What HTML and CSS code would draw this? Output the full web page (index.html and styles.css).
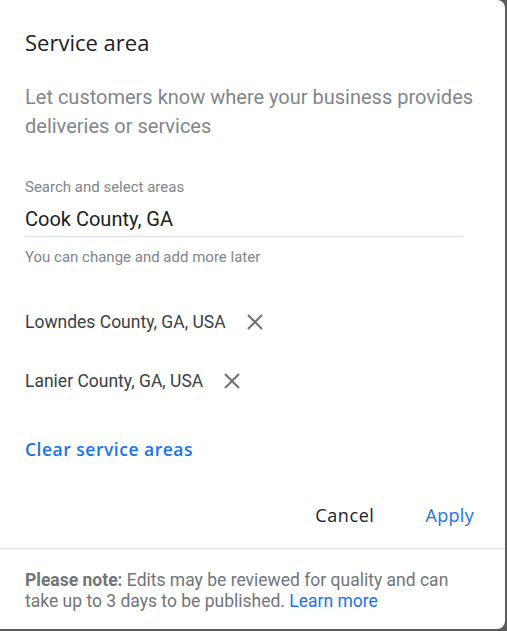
FILE: index.html
```html
<!doctype html>
<html>
  <head>
    <meta charset="utf-8">
    <title>Service area</title>
    <link rel="stylesheet" href="styles.css">
  </head>
  <body>
    <div class="dialog">
      <div class="body">
        <h1 class="title">Service area</h1>
        <p class="subtitle">Let customers know where your business provides deliveries or services</p>

        <div class="field">
          <label class="label">Search and select areas</label>
          <div class="input">Cook County, GA</div>
          <div class="hint">You can change and add more later</div>
        </div>

        <ul class="areas">
          <li>
            <span>Lowndes County, GA, USA</span>
            <button class="remove" aria-label="Remove">
              <svg width="18" height="18" viewBox="0 0 18 18"><path d="M2 2L16 16M16 2L2 16" stroke="#70757a" stroke-width="2.2" fill="none"/></svg>
            </button>
          </li>
          <li>
            <span>Lanier County, GA, USA</span>
            <button class="remove" aria-label="Remove">
              <svg width="18" height="18" viewBox="0 0 18 18"><path d="M2 2L16 16M16 2L2 16" stroke="#70757a" stroke-width="2.2" fill="none"/></svg>
            </button>
          </li>
        </ul>

        <a class="clear" href="#">Clear service areas</a>

        <div class="actions">
          <button class="btn">Cancel</button>
          <button class="btn primary">Apply</button>
        </div>
      </div>

      <div class="note">
        <b>Please note:</b> Edits may be reviewed for quality and can take up to 3 days to be published. <a href="#">Learn more</a>
      </div>
    </div>
  </body>
</html>
```

FILE: styles.css
```css
body {
  margin: 0;
  background: #5c5c5c;
  font-family: Roboto, 'Liberation Sans', sans-serif;
}

.dialog {
  width: 505px;
  height: 629px;
  background: #fff;
  border-radius: 0 8px 8px 0;
  overflow: hidden;
}

.body {
  padding: 28px 31px 0 25px;
}

.title {
  margin: 0;
  font-family: 'Open Sans', Roboto, sans-serif;
  font-size: 22px;
  line-height: 28px;
  font-weight: 400;
  color: #202124;
}

.subtitle {
  margin: 27px 0 0;
  font-size: 20px;
  line-height: 29px;
  color: #80868b;
}

.field {
  margin-top: 37px;
  width: 438px;
}

.label {
  display: block;
  font-size: 15px;
  line-height: 18px;
  color: #80868b;
}

.input {
  margin-top: 11px;
  padding-bottom: 5px;
  font-size: 20px;
  line-height: 24px;
  color: #202124;
  border-bottom: 1px solid #dadce0;
}

.hint {
  margin-top: 11px;
  font-size: 15px;
  line-height: 18px;
  color: #80868b;
}

.areas {
  list-style: none;
  margin: 44px 0 0;
  padding: 0;
}

.areas li {
  display: flex;
  align-items: center;
  height: 24px;
  font-size: 17.5px;
  color: #3c4043;
}

.areas li + li {
  margin-top: 35px;
}

.remove {
  display: flex;
  margin-left: 20px;
  padding: 0;
  border: 0;
  background: none;
}

.clear {
  display: block;
  margin-top: 44px;
  font-family: 'Open Sans', Roboto, sans-serif;
  font-size: 17.5px;
  line-height: 24px;
  font-weight: 600;
  letter-spacing: 0.5px;
  color: #1a73e8;
  text-decoration: none;
}

.actions {
  display: flex;
  justify-content: flex-end;
  gap: 51px;
  margin-top: 42px;
  height: 24px;
  padding-bottom: 21px;
}

.btn {
  padding: 0;
  border: 0;
  background: none;
  font-family: 'Open Sans', Roboto, sans-serif;
  font-size: 18px;
  line-height: 24px;
  font-weight: 500;
  letter-spacing: 0.6px;
  color: #202124;
}

.btn.primary {
  color: #1a73e8;
  letter-spacing: 0.3px;
}

.note {
  border-top: 1px solid #dadce0;
  padding: 21px 25px 0;
  font-size: 17.5px;
  line-height: 21px;
  color: #70757a;
}

.note b {
  font-weight: 700;
}

.note a {
  color: #1a73e8;
  text-decoration: none;
}
```
